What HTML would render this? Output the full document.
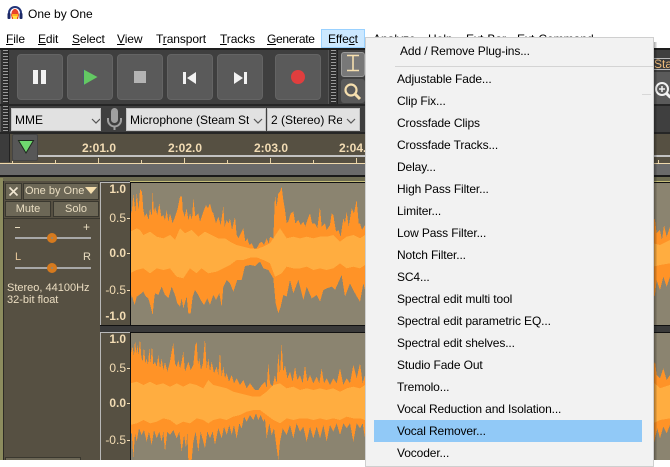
<!DOCTYPE html>
<html><head><meta charset="utf-8"><title>One by One</title>
<style>
html,body{margin:0;padding:0}
body{width:670px;height:460px;overflow:hidden;position:relative;background:#fff;font-family:"Liberation Sans",sans-serif;font-size:12px;color:#000}
div{position:absolute;box-sizing:border-box}
svg{position:absolute;overflow:hidden}
.t{white-space:nowrap;line-height:16px;height:16px}
u{text-decoration:underline}
.mb{letter-spacing:-.1px}
.btn{top:54px;width:46px;height:46px;background:#5a5a5a;border:1px solid #646464;border-radius:4px}
.grip{background:#333;background-image:repeating-linear-gradient(to bottom,#9a9a9a 0,#9a9a9a 1px,#2c2c2c 1px,#2c2c2c 3px);background-size:5px 100%;background-repeat:no-repeat;background-position:2px 0;border-left:1px solid #555;border-right:1px solid #222}
.cb{top:108px;height:23px;background:#e1e1e1;border:1px solid #c4c4c4;overflow:hidden}
.cbt{position:absolute;top:3px;left:3px;white-space:nowrap;line-height:16px;color:#000;font-size:12px}
.rl{color:#f2dcb4;font-weight:bold;font-size:12px}
.vl{color:#f2dcb4;font-size:12px;text-align:right;left:100px;width:26px}
.vb{font-weight:bold}
.tick{background:#e8d4aa;width:1px}
.hb{background:#6c6756;border:1px solid #3a382f;color:#e8dcc0;text-align:center;font-size:11px;line-height:15px;white-space:nowrap;overflow:hidden}
.m{left:397px;color:#000;white-space:nowrap;line-height:16px;height:16px;letter-spacing:-.12px}
</style></head><body>

<svg style="left:7px;top:6px" width="16" height="15" viewBox="0 0 16 15">
<path d="M2 10V7a6 6 0 0 1 12 0v3" fill="none" stroke="#23357a" stroke-width="2"/>
<rect x="0.5" y="7" width="3" height="6" rx="1" fill="#1d2a66"/><rect x="12.5" y="7" width="3" height="6" rx="1" fill="#1d2a66"/>
<path d="M4 9L5 5 7 3h2l2 2 1 4-1 4H5z" fill="#e8442a"/><rect x="5" y="8" width="6" height="3" fill="#ffb020"/><rect x="6" y="10" width="4" height="3" fill="#ffe14a"/>
</svg>
<div class="t" style="left:28px;top:6px">One by One</div>

<div class="t mb" style="left:6px;top:31px"><u>F</u>ile</div>
<div class="t mb" style="left:38px;top:31px"><u>E</u>dit</div>
<div class="t mb" style="left:72px;top:31px"><u>S</u>elect</div>
<div class="t mb" style="left:117px;top:31px"><u>V</u>iew</div>
<div class="t mb" style="left:156px;top:31px">T<u>r</u>ansport</div>
<div class="t mb" style="left:220px;top:31px"><u>T</u>racks</div>
<div class="t" style="left:267px;top:31px;letter-spacing:-.3px"><u>G</u>enerate</div>
<div style="left:321px;top:29px;width:44px;height:19px;background:#cce8ff;border:1px solid #99d1ff"></div>
<div class="t mb" style="left:328px;top:31px">Effe<u>c</u>t</div>
<div class="t" style="left:373px;top:31px">Analyze</div>
<div class="t" style="left:428px;top:31px">Help</div>
<div class="t" style="left:466px;top:31px">Ext-Bar</div>
<div class="t" style="left:517px;top:31px">Ext-Command</div>

<!-- toolbars -->
<div style="left:0;top:48px;width:670px;height:130px;background:#3f3f3f"></div>
<div style="left:0;top:48px;width:670px;height:2px;background:#1e1e1e"></div>
<div style="left:0;top:104px;width:670px;height:2px;background:#262626"></div>
<div style="left:0;top:132px;width:670px;height:2px;background:#262626"></div>
<div class="grip" style="left:0;top:50px;width:9px;height:54px"></div>
<div class="btn" style="left:17px"></div>
<div class="btn" style="left:67px"></div>
<div class="btn" style="left:117px"></div>
<div class="btn" style="left:167px"></div>
<div class="btn" style="left:217px"></div>
<div class="btn" style="left:275px"></div>
<div style="left:33px;top:70px;width:5px;height:14px;background:#f2f2f2"></div>
<div style="left:41px;top:70px;width:5px;height:14px;background:#f2f2f2"></div>
<svg style="left:80px;top:66px" width="22" height="22"><path d="M3.5 3.5L17.5 11 3.5 19z" fill="#63c963"/><path d="M3.5 3.5V19" stroke="#4a5a70" stroke-width="1"/></svg>
<div style="left:134px;top:71px;width:12px;height:12px;background:#b4b4b4"></div>
<svg style="left:180px;top:68px" width="20" height="18"><rect x="3" y="4" width="3" height="12" fill="#f2f2f2"/><path d="M16 4V16L7 10z" fill="#f2f2f2"/></svg>
<svg style="left:230px;top:68px" width="20" height="18"><rect x="14" y="4" width="3" height="12" fill="#f2f2f2"/><path d="M4 4V16L13 10z" fill="#f2f2f2"/></svg>
<div style="left:291px;top:70px;width:14px;height:14px;border-radius:50%;background:#e03e3e"></div>
<div class="grip" style="left:328px;top:50px;width:10px;height:54px"></div>
<div style="left:341px;top:52px;width:24px;height:25px;background:#787878;border:1px solid #9a9a9a;border-radius:3px"></div>
<svg style="left:344px;top:54px" width="21" height="20"><path d="M3 1.500h12M9 1.500v15M3 16.500h12" stroke="#f6dfae" stroke-width="1.600" fill="none"/></svg>
<div style="left:341px;top:79px;width:24px;height:24px;background:#5a5a5a;border-radius:3px"></div>
<svg style="left:343px;top:82px" width="22" height="20"><circle cx="8" cy="8" r="5.5" fill="none" stroke="#f6dfae" stroke-width="2.2"/><path d="M12 12l5 5" stroke="#f6dfae" stroke-width="3"/></svg>

<div class="grip" style="left:0;top:106px;width:9px;height:26px"></div>
<div class="cb" style="left:11px;width:90px"><span class="cbt">MME</span>
<svg style="left:79px;top:9px" width="10" height="6"><path d="M1 1l4 4 4-4" fill="none" stroke="#555" stroke-width="1.2"/></svg></div>
<svg style="left:105px;top:107px" width="20" height="25"><rect x="6" y="1" width="7" height="15" rx="3.5" fill="#a0a0a0"/><path d="M3 11v2a6.5 6.5 0 0 0 13 0v-2M9.500 20v3" fill="none" stroke="#a0a0a0" stroke-width="2"/></svg>
<div class="cb" style="left:126px;width:140px"><span class="cbt" style="width:119px;overflow:hidden">Microphone (Steam Streaming</span>
<svg style="left:126px;top:9px" width="10" height="6"><path d="M1 1l4 4 4-4" fill="none" stroke="#555" stroke-width="1.2"/></svg></div>
<div class="cb" style="left:267px;width:93px"><span class="cbt" style="width:71px;overflow:hidden">2 (Stereo) Recording</span>
<svg style="left:78px;top:9px" width="10" height="6"><path d="M1 1l4 4 4-4" fill="none" stroke="#555" stroke-width="1.2"/></svg></div>

<!-- ruler -->
<div style="left:0;top:134px;width:670px;height:30px;background:#565042"></div>
<div style="left:0;top:134px;width:10px;height:28px;background:#3c3c3c;border-right:1px solid #222"></div>
<div style="left:38px;top:155px;width:632px;height:2px;background:#c2c2c2"></div>
<div style="left:0;top:163px;width:670px;height:1px;background:#efd9ac"></div>
<div class="tick" style="left:12px;top:161px;height:2px"></div>
<div class="tick" style="left:55px;top:160px;height:3px"></div>
<div class="tick" style="left:98px;top:158px;height:5px"></div>
<div class="tick" style="left:141px;top:160px;height:3px"></div>
<div class="tick" style="left:184px;top:158px;height:5px"></div>
<div class="tick" style="left:227px;top:160px;height:3px"></div>
<div class="tick" style="left:270px;top:158px;height:5px"></div>
<div class="tick" style="left:313px;top:160px;height:3px"></div>
<div class="tick" style="left:356px;top:158px;height:5px"></div>
<div class="tick" style="left:658px;top:160px;height:3px"></div>
<div style="left:12px;top:134px;width:26px;height:27px;background:#575757;border:1px solid #444;border-radius:2px"></div>
<svg style="left:17px;top:139px" width="18" height="16"><path d="M1.500 1.500H16.500L9 14z" fill="#6fd86f" stroke="#1f2a1f" stroke-width="1"/></svg>
<div class="t rl" style="left:82px;top:140px">2:01.0</div>
<div class="t rl" style="left:168px;top:140px">2:02.0</div>
<div class="t rl" style="left:254px;top:140px">2:03.0</div>
<div class="t rl" style="left:339px;top:140px">2:04.</div>
<div style="left:0;top:164px;width:670px;height:11px;background:#6a6a6a"></div>
<div style="left:0;top:175px;width:670px;height:2px;background:#1a1a1a"></div>
<div style="left:0;top:177px;width:670px;height:4px;background:#6e6c52"></div>

<!-- track area -->
<div style="left:0;top:181px;width:670px;height:279px;background:#3a3a3a"></div>
<div style="left:0;top:178px;width:3px;height:282px;background:#8c8c5e"></div>
<div style="left:3px;top:181px;width:97px;height:279px;background:#565042;border-left:1px solid #2d2b24"></div>
<div style="left:100px;top:182px;width:30px;height:143px;background:#565042;border-left:1px solid #b8b8b8;border-top:1px solid #b8b8b8"></div>
<div style="left:100px;top:332px;width:30px;height:128px;background:#565042;border-left:1px solid #b8b8b8;border-top:1px solid #b8b8b8"></div>
<div style="left:130px;top:181px;width:540px;height:1px;background:#c4bd78"></div>
<div style="left:130px;top:182px;width:540px;height:143px;background:#8b8470;border-left:1px solid #111;border-top:1px solid #111"></div>
<div style="left:130px;top:332px;width:540px;height:128px;background:#8b8470;border-left:1px solid #111;border-top:1px solid #111"></div>
<div style="left:100px;top:325px;width:570px;height:1px;background:#111"></div>

<svg style="left:131px;top:183px" width="539" height="142" viewBox="3 9 1617 426" shape-rendering="crispEdges">
<polygon fill="#ff9327" points="0,70 5,100 10,42 16,95 20,40 26,90 30,28 36,35 40,90 44,110 50,100 56,120 60,85 65,110 68,35 72,100 75,80 82,105 88,70 94,110 100,105 105,120 110,90 115,125 120,100 128,130 135,110 142,90 150,50 156,50 158,90 164,110 170,85 175,120 180,100 186,120 190,55 196,110 205,100 210,125 215,110 222,90 228,75 234,85 240,70 246,95 250,100 258,130 265,110 272,135 280,80 284,140 290,120 296,130 300,115 306,150 315,110 320,165 325,175 340,145 346,185 352,175 358,195 365,190 372,205 380,205 388,190 395,185 402,195 410,175 416,190 420,170 430,175 435,45 440,80 445,40 450,35 455,20 460,60 465,90 470,130 475,125 482,100 490,95 496,130 505,120 512,135 520,125 526,140 532,120 540,100 546,130 555,130 562,145 570,80 575,140 585,130 590,150 600,135 605,100 610,105 618,155 625,150 632,170 640,115 645,130 650,95 656,140 665,85 672,100 680,60 686,130 690,130 696,150 705,135 1569,110 1575,120 1580,160 1590,150 1596,180 1602,135 1610,170 1620,140 1620,225 0,225"/>
<polygon fill="#ff9327" points="0,375 5,345 14,375 20,350 28,345 40,335 48,350 55,355 62,380 68,405 72,360 75,340 85,345 95,320 105,345 115,355 125,320 135,345 142,370 150,380 155,355 160,385 170,350 175,400 182,400 188,350 195,330 205,345 212,360 222,375 232,355 240,375 250,345 258,360 268,340 275,380 280,320 290,300 300,310 310,335 322,300 335,300 345,258 360,255 375,258 390,245 400,265 415,270 430,295 437,370 445,400 452,380 460,345 470,350 480,300 490,340 505,300 520,360 530,320 545,355 560,345 570,365 580,330 590,325 605,320 615,330 635,285 645,350 660,310 675,340 690,365 700,310 705,330 1569,355 1575,345 1580,300 1590,330 1600,290 1610,320 1620,290 1620,225 0,225"/>
<polygon fill="#ffad40" points="0,155 20,145 30,150 40,165 60,155 80,170 100,175 120,165 135,180 150,145 165,160 185,150 205,170 225,155 245,165 265,175 285,175 300,185 320,195 340,200 360,205 380,207 400,200 420,190 430,175 450,145 470,175 490,170 510,175 530,170 550,175 570,170 590,170 610,165 630,185 650,170 670,165 690,175 705,165 1569,190 1590,195 1620,180 1620,250 1590,255 1569,260 705,255 690,265 670,260 650,265 630,250 610,265 590,270 570,265 550,270 530,260 510,265 490,265 470,260 455,280 435,290 420,250 400,240 380,232 360,233 340,240 320,240 300,255 280,265 260,275 235,280 215,265 200,280 180,265 160,295 140,290 120,265 100,270 80,265 60,280 40,265 20,270 0,280"/>
</svg>

<svg style="left:131px;top:333px" width="539" height="127" viewBox="3 474 1617 381" shape-rendering="crispEdges">
<polygon fill="#ff9327" points="0,540 4,530 8,515 12,545 15,495 19,535 22,510 26,540 30,490 34,545 38,560 42,515 46,565 50,550 54,570 58,520 62,565 66,510 70,570 75,560 80,575 85,540 90,580 95,550 100,585 105,560 112,590 120,560 125,530 130,505 135,565 140,575 145,555 150,580 155,560 160,530 165,590 175,560 182,585 190,570 196,510 200,500 204,570 208,550 213,585 218,570 225,490 230,580 235,550 240,590 245,560 252,595 260,575 265,600 270,530 275,605 280,575 285,610 290,595 297,620 305,600 312,625 320,610 330,630 340,615 350,640 360,625 375,645 385,645 395,630 405,620 410,640 415,565 420,625 428,635 435,600 440,625 445,535 450,600 455,505 460,590 465,570 472,610 480,590 488,620 495,575 502,615 510,600 518,625 525,570 532,620 540,600 550,625 560,605 568,625 575,580 582,625 590,610 600,630 610,610 620,625 630,580 640,630 650,610 660,625 670,570 680,610 690,565 698,625 705,600 1569,576 1575,560 1580,600 1590,610 1600,580 1610,615 1620,600 1620,680 0,680"/>
<polygon fill="#ff9327" points="0,800 5,770 10,850 15,775 20,800 27,760 35,780 42,765 50,800 57,770 65,810 72,765 80,790 88,770 95,800 100,770 105,830 112,770 120,780 130,765 140,790 148,770 155,830 162,780 168,820 172,775 175,855 185,855 190,800 197,770 205,830 212,770 225,820 232,770 240,790 248,770 255,810 265,760 275,790 282,755 290,780 298,750 305,780 312,750 320,790 328,745 335,760 342,725 350,740 360,720 370,735 378,715 385,735 392,720 400,740 405,730 410,790 418,745 425,780 432,760 440,820 445,855 450,800 458,760 470,780 480,750 490,790 500,745 510,770 520,755 530,800 540,755 550,790 560,755 570,790 580,750 590,800 600,750 610,770 620,745 630,780 640,745 650,760 660,745 670,800 680,745 690,760 698,745 705,790 1569,816 1575,790 1582,760 1590,790 1600,755 1610,775 1620,750 1620,680 0,680"/>
<polygon fill="#ffad40" points="0,625 20,620 40,630 60,620 80,630 100,625 120,635 140,625 160,635 180,625 200,630 220,640 235,615 250,630 270,635 290,640 310,650 330,655 350,660 370,665 390,665 410,650 430,630 450,625 470,640 490,635 510,645 530,640 550,645 570,640 590,645 610,640 630,650 650,640 670,635 690,640 705,630 1569,620 1590,640 1620,630 1620,730 1590,735 1569,745 705,735 690,730 670,730 650,725 630,735 610,730 590,735 570,730 550,735 530,730 510,730 490,735 470,730 450,745 430,735 410,720 390,705 370,705 350,710 330,720 310,725 290,735 270,730 250,735 235,745 220,735 200,730 180,745 160,740 140,750 120,735 100,730 80,740 60,745 40,735 20,745 0,750"/>
</svg>

<!-- vertical rulers -->
<div class="t vl vb" style="top:181px">1.0</div>
<div class="t vl" style="top:210px">0.5</div>
<div class="t vl vb" style="top:245px">0.0</div>
<div class="t vl" style="top:282px">-0.5</div>
<div class="t vl vb" style="top:308px">-1.0</div>
<div class="t vl vb" style="top:331px">1.0</div>
<div class="t vl" style="top:360px">0.5</div>
<div class="t vl vb" style="top:395px">0.0</div>
<div class="t vl" style="top:432px">-0.5</div>
<div style="left:127px;top:218px;width:3px;height:1px;background:#f2dcb4"></div>
<div style="left:127px;top:253px;width:3px;height:1px;background:#f2dcb4"></div>
<div style="left:127px;top:290px;width:3px;height:1px;background:#f2dcb4"></div>
<div style="left:127px;top:368px;width:3px;height:1px;background:#f2dcb4"></div>
<div style="left:127px;top:403px;width:3px;height:1px;background:#f2dcb4"></div>
<div style="left:127px;top:440px;width:3px;height:1px;background:#f2dcb4"></div>

<!-- track panel -->
<div class="hb" style="left:5px;top:183px;width:17px;height:17px"></div>
<svg style="left:8px;top:186px" width="11" height="11"><path d="M1.500 1.500l8 8M9.500 1.500l-8 8" stroke="#f2e8d4" stroke-width="1.600"/></svg>
<div class="hb" style="left:23px;top:183px;width:76px;height:17px;text-align:left;padding-left:1px">One by One</div>
<svg style="left:85px;top:187px" width="13" height="8"><path d="M0 0H12L6 7z" fill="#f6dfae"/></svg>
<div class="hb" style="left:5px;top:201px;width:46px;height:16px">Mute</div>
<div class="hb" style="left:53px;top:201px;width:46px;height:16px">Solo</div>
<div style="left:4px;top:218px;width:96px;height:1px;background:#3a382f"></div>
<div style="left:15px;top:237px;width:76px;height:2px;background:#a8a8a8"></div>
<div style="left:15px;top:267px;width:76px;height:2px;background:#a8a8a8"></div>
<div style="left:47px;top:233px;width:10px;height:10px;border-radius:50%;background:#8a8a7a;border:4px solid #d67a1e"></div>
<div style="left:47px;top:263px;width:10px;height:10px;border-radius:50%;background:#8a8a7a;border:4px solid #d67a1e"></div>
<div style="left:15px;top:227px;width:5px;height:1px;background:#e8dcc0"></div>
<div class="t" style="left:83px;top:219px;color:#e8dcc0;font-size:12px">+</div>
<div class="t" style="left:15px;top:249px;color:#e8c89a;font-size:11px">L</div>
<div class="t" style="left:83px;top:249px;color:#e8dcc0;font-size:11px">R</div>
<div class="t" style="left:7px;top:280px;color:#eadcc0;font-size:11px">Stereo, 44100Hz</div>
<div class="t" style="left:7px;top:292px;color:#eadcc0;font-size:11px">32-bit float</div>
<div style="left:5px;top:457px;width:76px;height:3px;background:#6c6756;border:1px solid #3a382f;border-bottom:0"></div>

<!-- right toolbar bits -->
<div style="left:653px;top:58px;width:17px;height:12px;background:#3c3c3c;border-top:1px solid #b8b8b8;border-bottom:1px solid #b8b8b8"></div>
<div class="t" style="left:654px;top:56px;color:#f0bd7c;font-size:12px">Sta</div>
<div style="left:653px;top:72px;width:17px;height:32px;background:#5a5a5a"></div>
<svg style="left:654px;top:80px" width="16" height="20"><circle cx="8" cy="9" r="6" fill="none" stroke="#f2f2f2" stroke-width="2"/><path d="M5 9h6M8 6v6" stroke="#f2f2f2" stroke-width="1.500"/><path d="M12.500 13.500l4 4" stroke="#f2f2f2" stroke-width="3"/></svg>

<!-- dropdown -->
<div style="left:653px;top:42px;width:4px;height:418px;background:linear-gradient(to right,rgba(0,0,0,.45),rgba(0,0,0,.05))"></div>
<div style="left:365px;top:37px;width:289px;height:430px;background:#f2f2f2;border:1px solid #cfcfcf"></div>
<div style="left:395px;top:66px;width:258px;height:1px;background:#d4d4d4"></div>
<div style="left:642px;top:94px;width:9px;height:1px;background:#d8d8d8"></div>
<div style="left:374px;top:420px;width:268px;height:22px;background:#91c9f7"></div>
<div class="m" style="left:400px;top:43px">Add / Remove Plug-ins...</div>
<div class="m" style="top:71px">Adjustable Fade...</div>
<div class="m" style="top:93px">Clip Fix...</div>
<div class="m" style="top:115px">Crossfade Clips</div>
<div class="m" style="top:137px">Crossfade Tracks...</div>
<div class="m" style="top:159px">Delay...</div>
<div class="m" style="top:181px">High Pass Filter...</div>
<div class="m" style="top:203px">Limiter...</div>
<div class="m" style="top:225px">Low Pass Filter...</div>
<div class="m" style="top:247px">Notch Filter...</div>
<div class="m" style="top:269px">SC4...</div>
<div class="m" style="top:291px">Spectral edit multi tool</div>
<div class="m" style="top:313px">Spectral edit parametric EQ...</div>
<div class="m" style="top:335px">Spectral edit shelves...</div>
<div class="m" style="top:357px">Studio Fade Out</div>
<div class="m" style="top:379px">Tremolo...</div>
<div class="m" style="top:401px">Vocal Reduction and Isolation...</div>
<div class="m" style="top:423px">Vocal Remover...</div>
<div class="m" style="top:445px">Vocoder...</div>
</body></html>
